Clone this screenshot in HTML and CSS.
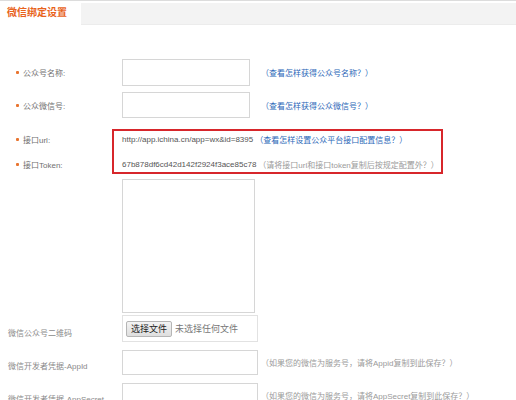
FILE: index.html
```html
<!DOCTYPE html>
<html lang="zh-CN">
<head>
<meta charset="utf-8">
<title>微信绑定设置</title>
<link rel="stylesheet" href="styles.css">
</head>
<body>
<div class="tabs">
  <div class="tab active">微信绑定设置</div>
  <div class="tab-rest"></div>
</div>
<form class="form">
  <div class="row r1">
    <div class="label req">公众号名称:</div>
    <input class="field w128 h27" type="text">
    <a class="link gap11" href="#">（查看怎样获得公众号名称？）</a>
  </div>
  <div class="row r2">
    <div class="label req">公众微信号:</div>
    <input class="field w128 h26" type="text">
    <a class="link gap11" href="#">（查看怎样获得公众微信号？）</a>
  </div>
  <div class="highlight">
    <div class="row r3">
      <div class="label req">接口url:</div>
      <span class="value">http://app.ichina.cn/app=wx&amp;id=8395</span>
      <a class="link gap2" href="#">（查看怎样设置公众平台接口配置信息？）</a>
    </div>
    <div class="row r4">
      <div class="label req">接口Token:</div>
      <span class="value">67b878df6cd42d142f2924f3ace85c78</span>
      <span class="hint gap2">（请将接口url和接口token复制后按规定配置外？）</span>
    </div>
  </div>
  <div class="row r5">
    <div class="label"></div>
    <textarea class="field area"></textarea>
  </div>
  <div class="row r6 low">
    <div class="label plain">微信公众号二维码</div>
    <div class="file">
      <span class="file-btn">选择文件</span>
      <span class="file-name">未选择任何文件</span>
    </div>
  </div>
  <div class="row r7 low">
    <div class="label plain">微信开发者凭据-AppId</div>
    <input class="field w136 h25" type="text">
    <span class="hint gap3">（如果您的微信为服务号，请将Appid复制到此保存？）</span>
  </div>
  <div class="row r8 low">
    <div class="label plain">微信开发者凭据-AppSecret</div>
    <input class="field w136 h25" type="text">
    <span class="hint gap3">（如果您的微信为服务号，请将AppSecret复制到此保存？）</span>
  </div>
</form>
</body>
</html>
```
FILE: styles.css
```css
html, body {
  margin: 0;
  padding: 0;
  background: #ffffff;
}
body {
  width: 516px;
  height: 400px;
  overflow: hidden;
  font-family: "Liberation Sans", "Noto Sans CJK SC", sans-serif;
  font-size: 8px;
  color: #666666;
}
.tabs {
  display: flex;
  height: 25px;
  border-top: 1px solid #dcdcdc;
  box-sizing: border-box;
}
.tab.active {
  width: 81px;
  padding-left: 7px;
  box-sizing: border-box;
  font-size: 10px;
  font-weight: bold;
  color: #e8631c;
  line-height: 24px;
  background: #ffffff;
}
.tab-rest {
  flex: 1;
  margin-top: 2px;
  background: #f3f3f3;
  border-bottom: 1px solid #ececec;
}
.form {
  margin: 0;
  padding-top: 34px;
  display: flex;
  flex-direction: column;
}
.row {
  display: flex;
  align-items: center;
}
.label {
  width: 122px;
  flex: none;
  box-sizing: border-box;
  padding-left: 16px;
  display: flex;
  align-items: center;
  color: #707070;
  white-space: nowrap;
}
.label.req::before {
  content: "";
  width: 3px;
  height: 3px;
  background: #e8742f;
  border-radius: 1px;
  margin-right: 4px;
}
.label.plain {
  padding-left: 8px;
  color: #8a8a8a;
  align-self: flex-end;
  padding-bottom: 4px;
}
.field {
  margin: 0;
  padding: 0;
  border: 1px solid #d6d6d6;
  background: #ffffff;
  box-sizing: border-box;
  outline: none;
  font: inherit;
}
.w128 { width: 128px; }
.w136 { width: 136px; }
.h27 { height: 27px; }
.h26 { height: 26px; }
.h25 { height: 25px; }
.area {
  width: 133px;
  height: 134px;
  resize: none;
}
.link {
  color: #2b67b8;
  text-decoration: none;
  white-space: nowrap;
}
.hint {
  color: #9a9a9a;
  white-space: nowrap;
}
.value {
  color: #555555;
  white-space: nowrap;
}
.gap11 { margin-left: 11px; }
.gap3 { margin-left: 3px; }
.gap2 { margin-left: 2px; }
.r2 { margin-top: 6px; }
.highlight {
  position: relative;
  margin-top: 11px;
  padding: 2px 0;
}
.highlight::after {
  content: "";
  position: absolute;
  left: 112px;
  width: 331px;
  top: 0;
  bottom: 0;
  border: 2px solid #d7262b;
  box-sizing: border-box;
  pointer-events: none;
}
.r3 { height: 16px; }
.r4 { height: 16px; margin-top: 9px; }
.r5 { margin-top: 5px; }
.r6 { margin-top: 2px; }
.r7 { margin-top: 8px; }
.r8 { margin-top: 8px; }
.file {
  width: 136px;
  height: 27px;
  border: 1px solid #e2e2e2;
  box-sizing: border-box;
  display: flex;
  align-items: center;
  padding-left: 3px;
  font-size: 9px;
}
.file-btn {
  height: 14px;
  padding: 0 4px;
  display: flex;
  align-items: center;
  border: 1px solid #b5b5b5;
  border-radius: 2px;
  background: linear-gradient(#f4f4f4, #dedede);
  color: #222222;
}
.file-name {
  margin-left: 3px;
  color: #777777;
}
```
